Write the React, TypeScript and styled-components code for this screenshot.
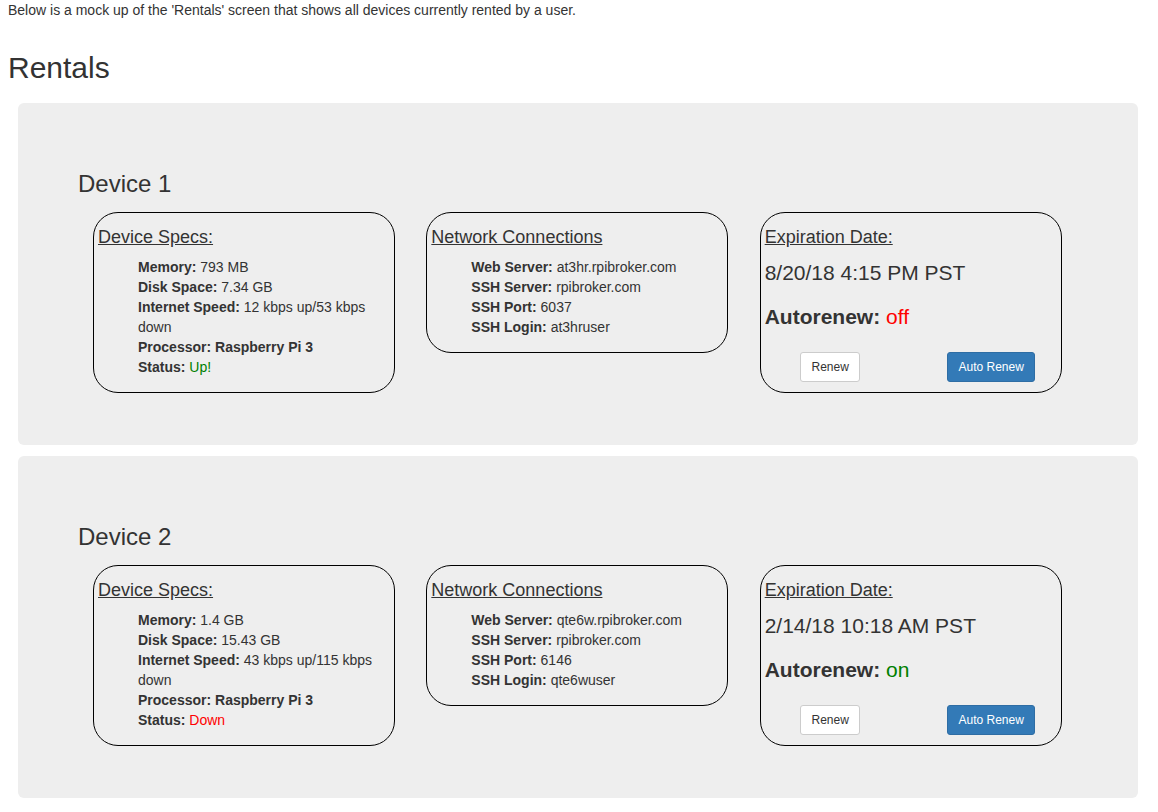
import React, { FC } from 'react';
import styled, { createGlobalStyle } from 'styled-components';

const GlobalStyle = createGlobalStyle`
  body {
    margin: 0;
    background: #fff;
    color: #333;
    font-family: 'Liberation Sans', Arial, sans-serif;
    font-size: 14px;
    line-height: 20px;
  }
  * { box-sizing: border-box; }
`;

const Page = styled.div`
  padding: 0 8px;
`;

const Intro = styled.p`
  margin: 0;
`;

const PageTitle = styled.h2`
  font-size: 30px;
  font-weight: 500;
  line-height: 33px;
  margin: 31px 0 19px;
`;

const Jumbotron = styled.section`
  background: #eee;
  border-radius: 6px;
  margin: 0 12px 11px 10px;
  padding: 48px 60px 52px;
`;

const DeviceTitle = styled.h3`
  font-size: 24px;
  font-weight: 500;
  line-height: 26px;
  margin: 20px 0 15px;
`;

const Row = styled.div`
  display: grid;
  grid-template-columns: repeat(3, 1fr);
  align-items: start;
`;

const Card = styled.div`
  margin-left: 15px;
  width: 302px;
  border: 1px solid #000;
  border-radius: 25px;
  padding: 4px;
`;

const CardTitle = styled.h4`
  font-size: 18px;
  font-weight: 500;
  line-height: 20px;
  margin: 10px 0;
  text-decoration: underline;
`;

const List = styled.ul`
  list-style: none;
  margin: 0 0 11px;
  padding-left: 40px;
`;

const Label = styled.b`
  font-weight: 700;
`;

const Colored = styled.span<{ $color: string }>`
  color: ${(p) => p.$color};
`;

const DateLine = styled.div`
  font-size: 21px;
  line-height: 30px;
  padding-top: 1px;
  margin-bottom: 14px;
`;

const RenewLine = styled.div`
  font-size: 21px;
  line-height: 30px;
  margin-bottom: 20px;
`;

const ButtonRow = styled.div`
  display: grid;
  grid-template-columns: 1fr 1fr;
  margin: 0 -15px 6px;
`;

const ButtonCell = styled.div`
  text-align: center;
`;

const Button = styled.button<{ $primary?: boolean }>`
  font-family: inherit;
  font-size: 12px;
  line-height: 18px;
  padding: 5px 10px;
  border-radius: 3px;
  border: 1px solid ${(p) => (p.$primary ? '#2e6da4' : '#ccc')};
  background: ${(p) => (p.$primary ? '#337ab7' : '#fff')};
  color: ${(p) => (p.$primary ? '#fff' : '#333')};
  cursor: pointer;
`;

interface Device {
  name: string;
  memory: string;
  disk: string;
  speed: string;
  up: boolean;
  web: string;
  port: string;
  login: string;
  expires: string;
  autorenew: boolean;
}

const devices: Device[] = [
  {
    name: 'Device 1',
    memory: '793 MB',
    disk: '7.34 GB',
    speed: '12 kbps up/53 kbps down',
    up: true,
    web: 'at3hr.rpibroker.com',
    port: '6037',
    login: 'at3hruser',
    expires: '8/20/18 4:15 PM PST',
    autorenew: false,
  },
  {
    name: 'Device 2',
    memory: '1.4 GB',
    disk: '15.43 GB',
    speed: '43 kbps up/115 kbps down',
    up: false,
    web: 'qte6w.rpibroker.com',
    port: '6146',
    login: 'qte6wuser',
    expires: '2/14/18 10:18 AM PST',
    autorenew: true,
  },
];

const DeviceBlock: FC<{ d: Device }> = ({ d }) => (
  <Jumbotron>
    <DeviceTitle>{d.name}</DeviceTitle>
    <Row>
      <Card>
        <CardTitle>Device Specs:</CardTitle>
        <List>
          <li><Label>Memory:</Label> {d.memory}</li>
          <li><Label>Disk Space:</Label> {d.disk}</li>
          <li><Label>Internet Speed:</Label> {d.speed}</li>
          <li><Label>Processor: Raspberry Pi 3</Label></li>
          <li>
            <Label>Status:</Label>{' '}
            <Colored $color={d.up ? 'green' : 'red'}>{d.up ? 'Up!' : 'Down'}</Colored>
          </li>
        </List>
      </Card>
      <Card>
        <CardTitle>Network Connections</CardTitle>
        <List>
          <li><Label>Web Server:</Label> {d.web}</li>
          <li><Label>SSH Server:</Label> rpibroker.com</li>
          <li><Label>SSH Port:</Label> {d.port}</li>
          <li><Label>SSH Login:</Label> {d.login}</li>
        </List>
      </Card>
      <Card>
        <CardTitle>Expiration Date:</CardTitle>
        <DateLine>{d.expires}</DateLine>
        <RenewLine>
          <Label>Autorenew:</Label>{' '}
          <Colored $color={d.autorenew ? 'green' : 'red'}>{d.autorenew ? 'on' : 'off'}</Colored>
        </RenewLine>
        <ButtonRow>
          <ButtonCell><Button>Renew</Button></ButtonCell>
          <ButtonCell><Button $primary>Auto Renew</Button></ButtonCell>
        </ButtonRow>
      </Card>
    </Row>
  </Jumbotron>
);

const App: FC = () => (
  <Page>
    <GlobalStyle />
    <Intro>Below is a mock up of the 'Rentals' screen that shows all devices currently rented by a user.</Intro>
    <PageTitle>Rentals</PageTitle>
    {devices.map((d) => (
      <DeviceBlock key={d.name} d={d} />
    ))}
  </Page>
);

export default App;
